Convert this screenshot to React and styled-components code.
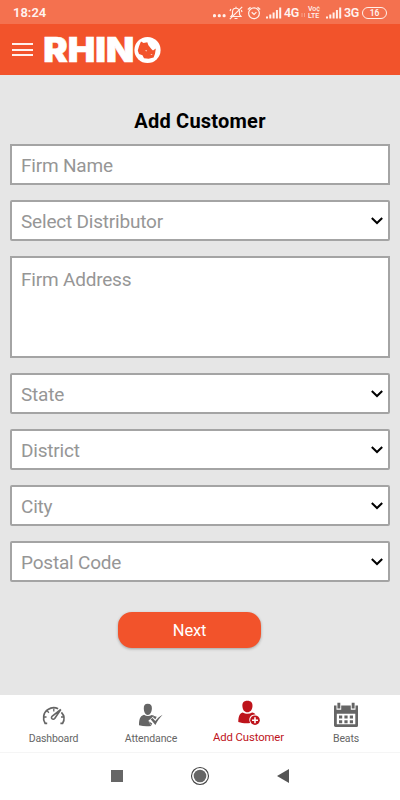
import React from "react";
import styled, { createGlobalStyle } from "styled-components";

const Global = createGlobalStyle`
  * { box-sizing: border-box; }
  body { margin: 0; background: #e6e6e6; font-family: Roboto, "Noto Sans", sans-serif; }
`;

const Screen = styled.div`
  display: flex;
  flex-direction: column;
  width: 400px;
  height: 800px;
  overflow: hidden;
  background: #e6e6e6;
`;

const StatusBar = styled.header`
  display: flex;
  align-items: center;
  height: 24px;
  flex: none;
  padding: 1px 13px 0 13px;
  background: #f4714f;
  color: #fff3ef;
`;

const Clock = styled.time`
  font-size: 13px;
  line-height: 16px;
  font-weight: 600;
  letter-spacing: 0;
  margin-right: auto;
`;

const StatusIcon = styled.svg`
  display: block;
  flex: none;
  margin-left: ${(p) => p.$gap}px;
`;

const Network = styled.span`
  width: 16px;
  margin-left: 2px;
  font-size: 12.5px;
  line-height: 16px;
  font-weight: 600;
  letter-spacing: -0.3px;
`;

const Volte = styled.span`
  display: flex;
  flex-direction: column;
  width: 14px;
  margin-left: 2px;
  font-size: 7px;
  line-height: 7px;
  font-weight: 500;
`;

const Battery = styled.span`
  display: flex;
  align-items: center;
  justify-content: center;
  width: 25px;
  height: 12px;
  margin-left: 2px;
  border: 1px solid #fff0ea;
  border-radius: 6px;
  font-size: 8.5px;
  line-height: 10px;
  font-weight: 600;
  letter-spacing: -0.2px;
`;

const AppBar = styled.div`
  display: flex;
  align-items: center;
  height: 51px;
  flex: none;
  padding-left: 12px;
  background: #f2532b;
`;

const MenuButton = styled.button`
  display: flex;
  flex-direction: column;
  justify-content: space-between;
  width: 21px;
  height: 13px;
  margin: 0 11px 0 0;
  padding: 0;
  border: 0;
  background: none;
`;

const MenuLine = styled.span`
  height: 2px;
  background: #fff1ec;
`;

const Logo = styled.svg`
  display: block;
  overflow: visible;
  font-family: Inter, "Liberation Sans", sans-serif;
  font-weight: 900;
`;

const Content = styled.main`
  display: flex;
  flex-direction: column;
  flex: 1;
  padding: 33px 10px 0;
`;

const Title = styled.h1`
  margin: 0 0 9px;
  font-size: 20px;
  line-height: 27px;
  font-weight: 700;
  letter-spacing: 0.22px;
  text-align: center;
  color: #000;
`;

const Fields = styled.div`
  display: flex;
  flex-direction: column;
  gap: 15px;
`;

const Field = styled.div`
  display: flex;
  align-items: ${(p) => (p.$tall ? "flex-start" : "center")};
  justify-content: space-between;
  height: ${(p) => (p.$tall ? 102 : 41)}px;
  padding: ${(p) => (p.$tall ? "10px 4px 0 9px" : "2px 4px 0 9px")};
  border: 2px solid #a4a4a4;
  border-radius: ${(p) => (p.$select ? 2 : 0)}px;
  background: #fff;
`;

const Placeholder = styled.span`
  font-size: 19px;
  line-height: 24px;
  letter-spacing: -0.2px;
  color: #969696;
`;

const NextButton = styled.button`
  align-self: center;
  width: 143px;
  height: 36px;
  margin: 30px 0 0 -21px;
  padding: 2px 0 0;
  border: 0;
  border-radius: 14px;
  background: #f2532b;
  box-shadow: 0 1px 3px rgba(0, 0, 0, 0.3);
  color: #fff;
  font: 400 16.5px/20px Roboto, sans-serif;
  letter-spacing: -0.2px;
`;

const TabBar = styled.nav`
  display: grid;
  grid-template-columns: 107px 88px 107px 88px;
  height: 58px;
  flex: none;
  background: #fff;
  border-bottom: 1px solid #f5f5f5;
`;

const Tab = styled.a`
  display: flex;
  flex-direction: column;
  align-items: center;
  padding-top: ${(p) => (p.$active ? 4 : 6)}px;
  color: ${(p) => (p.$active ? "#be131b" : "#656565")};
  font-size: ${(p) => (p.$active ? 11.3 : 10.5)}px;
  line-height: 14px;
  letter-spacing: ${(p) => (p.$active ? -0.1 : -0.12)}px;
  white-space: nowrap;
`;

const TabIcon = styled.svg`
  display: block;
  width: 28px;
  height: 28px;
  margin-bottom: ${(p) => (p.$active ? 4 : 3)}px;
`;

const SystemBar = styled.footer`
  display: flex;
  align-items: center;
  justify-content: center;
  gap: 66px;
  height: 47px;
  flex: none;
  padding-bottom: 2px;
  background: #fff;
`;

const Chevron = () => (
  <svg width="14" height="10" viewBox="0 0 14 10" fill="none" stroke="#000" strokeWidth="2">
    <path d="M1.8 1 7 6 12.2 1" />
  </svg>
);

const Signal = ({ gap }) => (
  <StatusIcon $gap={gap} width="16" height="12" viewBox="0 0 16 12" fill="#fff0ea">
    <path d="M0 9.5h2v2H0zM3.3 7.5h2v4h-2zM6.6 5.5h2v6h-2zM9.9 3h2v8.5h-2zM13.2 .5h2v11h-2z" />
  </StatusIcon>
);

const RhinoLogo = () => (
  <Logo width="130" height="31" viewBox="0 0 130 31" fill="#fff">
    <text x="-0.8" y="27.7" fontSize="33.5" textLength="91" lengthAdjust="spacingAndGlyphs" stroke="#fff" strokeWidth=".6">RHIN</text>
    <circle cx="103.5" cy="16" r="13.1" />
    <path fill="#f2532b" d="M97 7.4 99.6 9 103.3 8.2 104.4 11.2 107.6 15.2 109 16.6 111.8 14.6 111 19.8 109.6 23.6 104.6 24.7 100 24.3 98.5 21.2 95 20 93.8 16.6 95 12.2Z" />
    <path d="m101.2 16.2 2 .2-1.1 1.2zM106.5 20.3l2.2-.4-1.5 1z" />
  </Logo>
);

const DashboardIcon = () => (
  <TabIcon viewBox="0 0 28 28" fill="none" stroke="currentColor" strokeWidth="1.7">
    <path d="M7.2 22.3H5.1C2.4 18 3.2 11.4 8 8.5c3-2.1 7-2.4 10.1-.8M21.4 11.3c3 3.2 3.1 7.7 1.2 11h-2.2" />
    <path d="M13.8 7.5v3M7.3 10l1.6 1.7M4 16h2.5M21 16h2.7" strokeWidth="1.3" />
    <path d="M20.8 8.5 12.3 15c-2.2 2 .6 4.6 2.4 2.5Z" strokeWidth="1.6" />
  </TabIcon>
);

const AttendanceIcon = () => (
  <TabIcon viewBox="0 0 28 28" fill="currentColor">
    <path d="M10.7 2.8c3 0 4.4 2 4.2 4.8-.2 3.5-1.6 6.4-4.1 6.4S6.9 11.2 6.8 7.6c-.1-2.8 1-4.8 3.9-4.8ZM7 13.8c2.5 1.6 5.3 1.7 7.8.1l2.2.8-5.6 5 2.8 5.2c-4 .9-8.2.4-12.2-.6.1-4.6.3-9.2 5-10.5Z" />
    <path d="m13.6 18.2 2-1.2 2.7 3c2.4-3 4.5-4.7 7.3-6.2-3.2 3.2-5 6.2-7.2 10.2Z" />
    <path d="m16.3 14.7 3.4 1-1.3 2.5-2.2-1.6zM11.8 20.3l2.4 4.2 1-1.9z" />
  </TabIcon>
);

const CustomerIcon = () => (
  <TabIcon $active viewBox="0 0 28 28" fill="currentColor">
    <path d="M12.4 1.8c3.7 0 5.4 2.2 5.1 5.5-.3 3.8-2.2 6-5.1 6s-4.7-2.2-5-6c-.3-3.3 1.2-5.5 5-5.5ZM7.7 13.5c2.8 1.7 6.6 1.8 9.4.1 1.5.4 2.8 1 3.5 2.1-3.8-.7-6.8 2.4-6.2 6.1l.7 2.1c-3.8.6-8.1.2-11.8-1 .1-4.5.7-8.3 4.4-9.4Z" />
    <circle cx="20" cy="21.2" r="4.8" />
    <path d="M20 18.2v6M17 21.2h6" fill="none" stroke="#fff" strokeWidth="1.6" />
  </TabIcon>
);

const BeatsIcon = () => (
  <TabIcon viewBox="0 0 28 28" fill="currentColor">
    <path fillRule="evenodd" d="M2 4.4h24v20.2q0 1.5-1.5 1.5h-21Q2 26 2 24.6ZM4.8 12.7v10.6h18.5V12.7Z" />
    <path d="M4.5 1h4.7v7.8H4.5zM18.8 1h4.7v7.8h-4.7z" fill="#fff" />
    <path d="M5.4 1.7h2.9v5.7H5.4zM19.7 1.7h2.9v5.7h-2.9zM7 14.4h3.2v3H7zM12.4 14.4h3.2v3h-3.2zM17.8 14.4H21v3h-3.2zM7 19.2h3.2v3H7zM12.4 19.2h3.2v3h-3.2zM17.8 19.2H21v3h-3.2z" />
  </TabIcon>
);

const fields = [
  { label: "Firm Name" },
  { label: "Select Distributor", select: true },
  { label: "Firm Address", tall: true },
  { label: "State", select: true },
  { label: "District", select: true },
  { label: "City", select: true },
  { label: "Postal Code", select: true },
];

const tabs = [
  { label: "Dashboard", Icon: DashboardIcon },
  { label: "Attendance", Icon: AttendanceIcon },
  { label: "Add Customer", Icon: CustomerIcon, active: true },
  { label: "Beats", Icon: BeatsIcon },
];

export default function App() {
  return (
    <Screen>
      <Global />
      <StatusBar>
        <Clock>18:24</Clock>
        <StatusIcon $gap={0} width="14" height="12" viewBox="0 0 14 12" fill="#fff0ea">
          <circle cx="1.5" cy="8.7" r="1.6" />
          <circle cx="6.3" cy="8.7" r="1.6" />
          <circle cx="11.1" cy="8.7" r="1.6" />
        </StatusIcon>
        <StatusIcon $gap={2} width="14" height="14" viewBox="0 0 14 14" fill="none" stroke="#fff0ea" strokeWidth="1.2">
          <path d="M2 10.5h10l-1.5-2V6c0-5-7-5-7 0v2.5ZM5.5 12.5h3M7 .8v1.5M.8 13.2 13.2.8M1 5l.8-2M13 6l-.7-2" />
        </StatusIcon>
        <StatusIcon $gap={4} width="14" height="14" viewBox="0 0 14 14" fill="none" stroke="#fff0ea" strokeWidth="1.2">
          <circle cx="7" cy="7.3" r="5.4" />
          <path d="m4.7 6.2 2.4 2.3 2.3-2.3M.8 3.5l2.7-2.2M13.2 3.5l-2.7-2.2" />
        </StatusIcon>
        <Signal gap={5} />
        <Network>4G</Network>
        <StatusIcon $gap={1} width="5" height="10" viewBox="0 0 5 10" stroke="#f8a28c" strokeWidth="1">
          <path d="M1 5v4M3.5 5v4" />
        </StatusIcon>
        <Volte><span>Vo¢</span><span>LTE</span></Volte>
        <Signal gap={4} />
        <Network>3G</Network>
        <Battery>16</Battery>
      </StatusBar>
      <AppBar>
        <MenuButton aria-label="Menu"><MenuLine /><MenuLine /><MenuLine /></MenuButton>
        <RhinoLogo />
      </AppBar>
      <Content>
        <Title>Add Customer</Title>
        <Fields>
          {fields.map(({ label, select, tall }) => (
            <Field key={label} $select={select} $tall={tall}>
              <Placeholder>{label}</Placeholder>
              {select && <Chevron />}
            </Field>
          ))}
        </Fields>
        <NextButton>Next</NextButton>
      </Content>
      <TabBar>
        {tabs.map(({ label, Icon, active }) => (
          <Tab key={label} $active={active}>
            <Icon />
            {label}
          </Tab>
        ))}
      </TabBar>
      <SystemBar>
        <svg width="14" height="14"><path d="M1 1h12v12H1z" fill="#666" /></svg>
        <svg width="20" height="20" viewBox="0 0 20 20">
          <circle cx="10" cy="10" r="8.5" fill="none" stroke="#444" strokeWidth="1.1" />
          <circle cx="10" cy="10" r="6.3" fill="#666" />
        </svg>
        <svg width="14" height="16"><path d="M13 1v14L1 8z" fill="#555" /></svg>
      </SystemBar>
    </Screen>
  );
}
